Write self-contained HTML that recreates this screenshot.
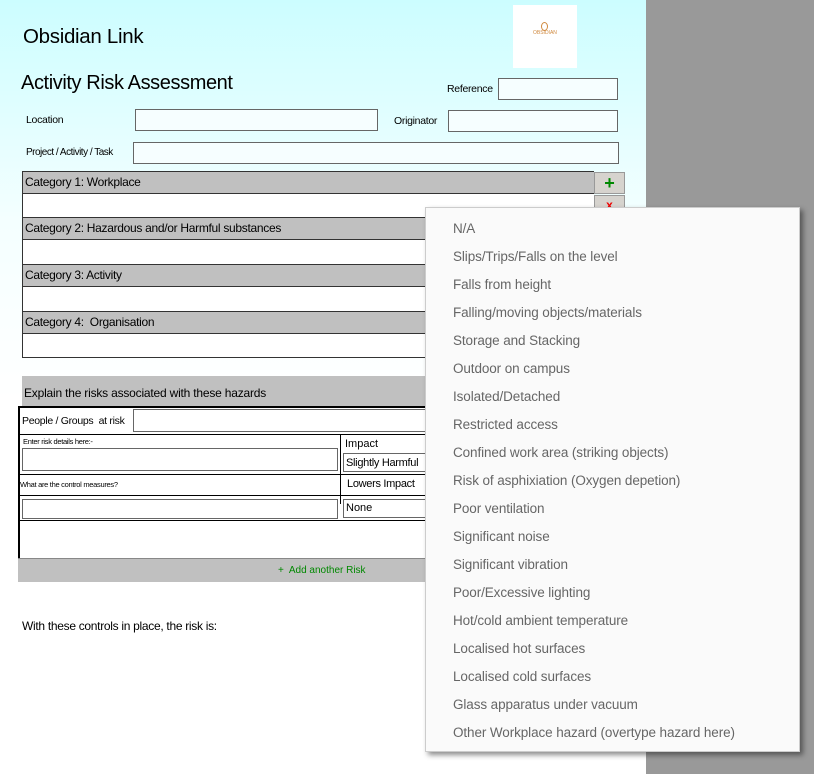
<!DOCTYPE html>
<html><head><style>
body{margin:0;width:814px;height:774px;position:relative;overflow:hidden;background:#999;font-family:"Liberation Sans",sans-serif;}
#pg{position:absolute;left:0;top:0;width:646px;height:774px;background:linear-gradient(#ccfdff 0px,#f4ffff 220px,#fff 400px);}
.a{position:absolute;}
.in{position:absolute;background:#f6feff;border:1px solid #666;box-sizing:border-box;}
.lbl{position:absolute;font-size:10.5px;color:#000;letter-spacing:-0.3px;}
.bar{position:absolute;left:22px;width:572px;height:23px;background:#c0c0c0;border-top:1px solid #333;border-bottom:1px solid #333;border-left:1px solid #333;box-sizing:border-box;font-size:12px;padding:3px 2px;letter-spacing:-0.3px;}
.row{position:absolute;left:22px;width:572px;background:#fff;border-left:1px solid #333;box-sizing:border-box;}
#dd{position:absolute;left:425px;top:207px;width:375px;height:545px;background:#fafafa;border:1px solid #ccc;box-sizing:border-box;box-shadow:3px 3px 5px rgba(0,0,0,.45);}
#dd div{position:absolute;left:27px;font-size:13.5px;color:#666;letter-spacing:-0.1px;}
</style></head><body>
<div id="pg">
<div class="a" style="left:23px;top:25px;font-size:20.5px;letter-spacing:-0.3px;">Obsidian Link</div>
<div class="a" style="left:513px;top:5px;width:64px;height:63px;background:#fff;"></div>
<div class="a" style="left:533px;top:30px;font-size:5px;color:#d08a40;">OBSIDIAN</div>
<div class="a" style="left:541px;top:22px;width:5px;height:7px;border:1px solid #d08a40;border-radius:50%;"></div>
<div class="a" style="left:21px;top:72px;font-size:20px;letter-spacing:-0.4px;">Activity Risk Assessment</div>
<div class="lbl" style="left:447px;top:83px;">Reference</div>
<div class="in" style="left:498px;top:78px;width:120px;height:22px;"></div>
<div class="lbl" style="left:26px;top:114px;">Location</div>
<div class="in" style="left:135px;top:109px;width:243px;height:22px;"></div>
<div class="lbl" style="left:394px;top:115px;">Originator</div>
<div class="in" style="left:448px;top:110px;width:170px;height:22px;"></div>
<div class="lbl" style="left:26px;top:147px;font-size:10px;letter-spacing:-0.5px;">Project / Activity / Task</div>
<div class="in" style="left:133px;top:142px;width:486px;height:22px;"></div>

<div class="bar" style="top:171px;">Category 1: Workplace</div>
<div class="row" style="top:194px;height:24px;"></div>
<div class="bar" style="top:217px;">Category 2: Hazardous and/or Harmful substances</div>
<div class="row" style="top:240px;height:25px;"></div>
<div class="bar" style="top:264px;">Category 3: Activity</div>
<div class="row" style="top:287px;height:25px;"></div>
<div class="bar" style="top:311px;">Category 4:&nbsp; Organisation</div>
<div class="row" style="top:334px;height:24px;border-bottom:1px solid #333;"></div>
<div class="a" style="left:594px;top:172px;width:31px;height:22px;background:#d6d3ce;border:1px solid #999;box-sizing:border-box;color:#080;font-size:18px;text-align:center;line-height:20px;font-weight:bold;">+</div>
<div class="a" style="left:594px;top:195px;width:31px;height:14px;background:#d6d3ce;border:1px solid #999;box-sizing:border-box;color:#e00;font-size:12px;text-align:center;font-weight:bold;line-height:18px;">x</div>

<div class="a" style="left:22px;top:376px;width:624px;height:30px;background:#c0c0c0;font-size:12px;box-sizing:border-box;padding:10px 2px;letter-spacing:-0.2px;">Explain the risks associated with these hazards</div>
<div class="a" style="left:18px;top:406px;width:628px;height:152px;background:#fff;border-left:2px solid #000;border-top:2px solid #000;box-sizing:border-box;"></div>
<div class="lbl" style="left:22px;top:415px;">People / Groups&nbsp; at risk</div>
<div class="in" style="left:133px;top:409px;width:320px;height:23px;background:#fff;"></div>
<div class="a" style="left:20px;top:434px;width:626px;height:1px;background:#000;"></div>
<div class="a" style="left:340px;top:434px;width:1px;height:70px;background:#000;"></div>
<div class="a" style="left:23px;top:437px;font-size:7.5px;letter-spacing:-0.3px;">Enter risk details here:-</div>
<div class="in" style="left:22px;top:448px;width:316px;height:23px;background:#fff;"></div>
<div class="a" style="left:345px;top:438px;font-size:11px;">Impact</div>
<div class="in" style="left:343px;top:453px;width:90px;height:19px;background:#fff;font-size:11px;padding:3px 2px;letter-spacing:-0.3px;">Slightly Harmful</div>
<div class="a" style="left:20px;top:474px;width:626px;height:1px;background:#000;"></div>
<div class="a" style="left:20px;top:480px;font-size:7.5px;letter-spacing:-0.3px;">What are the control measures?</div>
<div class="a" style="left:347px;top:478px;font-size:11px;letter-spacing:-0.3px;">Lowers Impact</div>
<div class="a" style="left:20px;top:495px;width:626px;height:1px;background:#000;"></div>
<div class="in" style="left:22px;top:499px;width:316px;height:20px;background:#fff;"></div>
<div class="in" style="left:343px;top:499px;width:90px;height:19px;background:#fff;font-size:11px;padding:2px 2px;">None</div>
<div class="a" style="left:20px;top:520px;width:626px;height:1px;background:#000;"></div>
<div class="a" style="left:18px;top:558px;width:628px;height:24px;background:#c0c0c0;border-top:1px solid #888;box-sizing:border-box;font-size:10px;color:#080;padding:6px 0 0 260px;">+&nbsp; Add another Risk</div>
<div class="a" style="left:22px;top:619px;font-size:12px;letter-spacing:-0.3px;">With these controls in place, the risk is:</div>
</div>
<div id="dd">
<div style="top:13px">N/A</div>
<div style="top:41px">Slips/Trips/Falls on the level</div>
<div style="top:69px">Falls from height</div>
<div style="top:97px">Falling/moving objects/materials</div>
<div style="top:125px">Storage and Stacking</div>
<div style="top:153px">Outdoor on campus</div>
<div style="top:181px">Isolated/Detached</div>
<div style="top:209px">Restricted access</div>
<div style="top:237px">Confined work area (striking objects)</div>
<div style="top:265px">Risk of asphixiation (Oxygen depetion)</div>
<div style="top:293px">Poor ventilation</div>
<div style="top:321px">Significant noise</div>
<div style="top:349px">Significant vibration</div>
<div style="top:377px">Poor/Excessive lighting</div>
<div style="top:405px">Hot/cold ambient temperature</div>
<div style="top:433px">Localised hot surfaces</div>
<div style="top:461px">Localised cold surfaces</div>
<div style="top:489px">Glass apparatus under vacuum</div>
<div style="top:517px">Other Workplace hazard (overtype hazard here)</div>
</div>
</body></html>
